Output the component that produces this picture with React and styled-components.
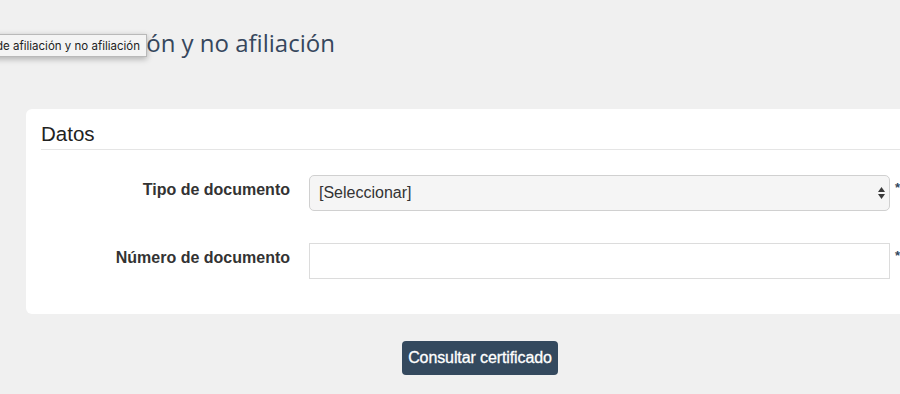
import React from 'react';
import styled, { createGlobalStyle } from 'styled-components';

const GlobalStyle = createGlobalStyle`
    html, body {
        margin: 0;
        padding: 0;
        background: #f0f0f0;
        overflow: hidden;
    }
    body {
        width: 900px;
        height: 394px;
        font-family: "Liberation Sans", Arial, sans-serif;
        color: #333;
    }
`;

const Page = styled.div`
    position: relative;
    width: 934px;
    padding: 0 0 0 26px;
    box-sizing: border-box;
`;

const TitleBar = styled.div`
    position: relative;
    height: 109px;
    padding-top: 27px;
    box-sizing: border-box;
`;

const Title = styled.h1`
    margin: 0 0 0 -112px;
    font-family: "Open Sans", sans-serif;
    font-size: 24px;
    font-weight: 400;
    line-height: 32px;
    color: #36475d;
    white-space: nowrap;
`;

const Tooltip = styled.div`
    position: absolute;
    top: 34px;
    right: calc(100% - 147px + 26px);
    height: 23px;
    padding: 0 6px;
    box-sizing: border-box;
    display: flex;
    align-items: center;
    background: #f4f4f4;
    border: 1px solid #b9b9b9;
    box-shadow: 0 2px 6px rgba(0, 0, 0, 0.28);
    font-family: "Inter", "Liberation Sans", sans-serif;
    font-size: 11.5px;
    color: #222;
    white-space: nowrap;
`;

const Card = styled.section`
    width: 908px;
    background: #fff;
    border-radius: 6px;
    padding: 14px 0 35px 15px;
    box-sizing: border-box;
`;

const CardHeader = styled.h2`
    margin: 0;
    padding-bottom: 4px;
    font-size: 20.5px;
    font-weight: 400;
    line-height: 22px;
    color: #222;
    border-bottom: 1px solid #e5e5e5;
`;

const Form = styled.div`
    display: grid;
    grid-template-columns: 264px 581px 18px;
    column-gap: 19px;
    row-gap: 32px;
    margin-top: 25px;
    margin-left: -15px;
`;

const Label = styled.label`
    align-self: start;
    padding-top: 5px;
    text-align: right;
    font-size: 16px;
    font-weight: 700;
    line-height: 20px;
    color: #333;
`;

const Field = styled.div`
    position: relative;
    height: 36px;
    box-sizing: border-box;
    border: 1px solid ${p => (p.$select ? '#d0d0d0' : '#dcdcdc')};
    border-radius: ${p => (p.$select ? '5px' : '0')};
    background: ${p => (p.$select ? '#f5f5f5' : '#fff')};
    display: flex;
    align-items: center;
    padding: 0 9px;
    font-size: 16px;
    color: #333;
`;

const Arrows = styled.svg`
    position: absolute;
    right: 3px;
    top: 10px;
`;

const Required = styled.span`
    align-self: start;
    margin-top: 5px;
    margin-left: -14px;
    font-size: 13px;
    font-weight: 700;
    color: #34495e;
`;

const Actions = styled.div`
    width: 908px;
    display: flex;
    justify-content: center;
    padding-top: 27px;
`;

const Button = styled.button`
    height: 34px;
    padding: 0 6px;
    border: none;
    border-radius: 4px;
    background: #34495e;
    color: #fff;
    font-family: "Liberation Sans", Arial, sans-serif;
    font-size: 16px;
    font-weight: 400;
    letter-spacing: -0.1px;
    -webkit-text-stroke: 0.3px #fff;
`;

export default function App() {
    return (
        <>
            <GlobalStyle />
            <Page>
                <TitleBar>
                    <Title>Certificado de afiliación y no afiliación</Title>
                    <Tooltip>Certificado de afiliación y no afiliación</Tooltip>
                </TitleBar>

                <Card>
                    <CardHeader>Datos</CardHeader>
                    <Form>
                        <Label>Tipo de documento</Label>
                        <Field $select>
                            [Seleccionar]
                            <Arrows width="9" height="14" viewBox="0 0 9 14">
                                <path d="M4.5 1 L8 6 H1 Z" fill="#3a3a3a" />
                                <path d="M4.5 13 L8 8 H1 Z" fill="#3a3a3a" />
                            </Arrows>
                        </Field>
                        <Required>*</Required>

                        <Label>Número de documento</Label>
                        <Field />
                        <Required>*</Required>
                    </Form>
                </Card>

                <Actions>
                    <Button>Consultar certificado</Button>
                </Actions>
            </Page>
        </>
    );
}
